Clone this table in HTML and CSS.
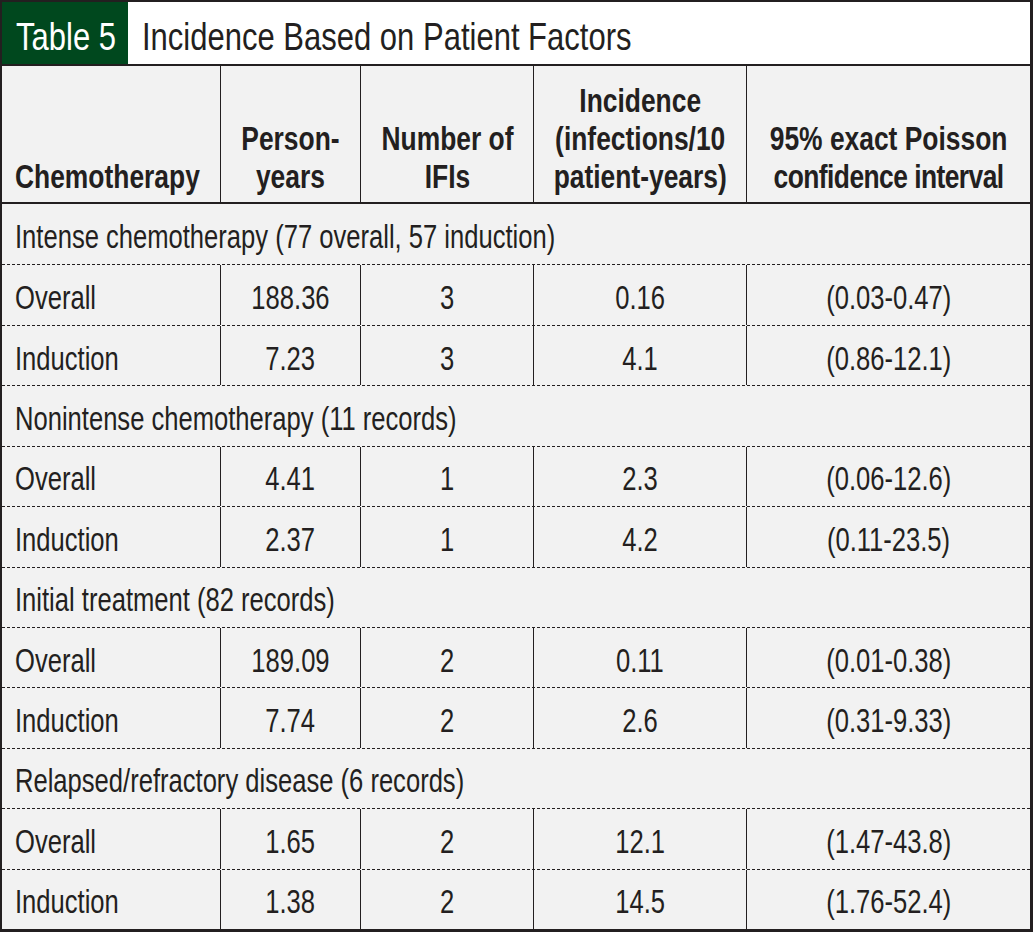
FILE: index.html
```html
<!DOCTYPE html>
<html lang="en">
<head>
<meta charset="utf-8">
<title>Table 5 Incidence Based on Patient Factors</title>
<link rel="stylesheet" href="styles.css">
</head>
<body>
<div class="figure">
  <div class="title-bar">
    <div class="label"><span class="t">Table 5</span></div>
    <div class="title"><span class="t">Incidence Based on Patient Factors</span></div>
  </div>
  <div class="head">
    <div class="hcell left"><span class="t">Chemotherapy</span></div>
    <div class="hcell"><span class="t">Person-<br>years</span></div>
    <div class="hcell"><span class="t">Number of<br>IFIs</span></div>
    <div class="hcell"><span class="t">Incidence<br>(infections/10<br>patient-years)</span></div>
    <div class="hcell last"><span class="t">95% exact Poisson<br><span class="tight">confidence interval</span></span></div>
  </div>
  <div class="body">
    <div class="section first"><span class="t">Intense chemotherapy (77 overall, 57 induction)</span></div>
    <div class="row"><div class="cell left"><span class="t">Overall</span></div><div class="cell"><span class="t">188.36</span></div><div class="cell"><span class="t">3</span></div><div class="cell"><span class="t">0.16</span></div><div class="cell last"><span class="t">(0.03-0.47)</span></div></div>
    <div class="row"><div class="cell left"><span class="t">Induction</span></div><div class="cell"><span class="t">7.23</span></div><div class="cell"><span class="t">3</span></div><div class="cell"><span class="t">4.1</span></div><div class="cell last"><span class="t">(0.86-12.1)</span></div></div>
    <div class="section"><span class="t">Nonintense chemotherapy (11 records)</span></div>
    <div class="row"><div class="cell left"><span class="t">Overall</span></div><div class="cell"><span class="t">4.41</span></div><div class="cell"><span class="t">1</span></div><div class="cell"><span class="t">2.3</span></div><div class="cell last"><span class="t">(0.06-12.6)</span></div></div>
    <div class="row"><div class="cell left"><span class="t">Induction</span></div><div class="cell"><span class="t">2.37</span></div><div class="cell"><span class="t">1</span></div><div class="cell"><span class="t">4.2</span></div><div class="cell last"><span class="t">(0.11-23.5)</span></div></div>
    <div class="section"><span class="t">Initial treatment (82 records)</span></div>
    <div class="row"><div class="cell left"><span class="t">Overall</span></div><div class="cell"><span class="t">189.09</span></div><div class="cell"><span class="t">2</span></div><div class="cell"><span class="t">0.11</span></div><div class="cell last"><span class="t">(0.01-0.38)</span></div></div>
    <div class="row"><div class="cell left"><span class="t">Induction</span></div><div class="cell"><span class="t">7.74</span></div><div class="cell"><span class="t">2</span></div><div class="cell"><span class="t">2.6</span></div><div class="cell last"><span class="t">(0.31-9.33)</span></div></div>
    <div class="section"><span class="t">Relapsed/refractory disease (6 records)</span></div>
    <div class="row"><div class="cell left"><span class="t">Overall</span></div><div class="cell"><span class="t">1.65</span></div><div class="cell"><span class="t">2</span></div><div class="cell"><span class="t">12.1</span></div><div class="cell last"><span class="t">(1.47-43.8)</span></div></div>
    <div class="row"><div class="cell left"><span class="t">Induction</span></div><div class="cell"><span class="t">1.38</span></div><div class="cell"><span class="t">2</span></div><div class="cell"><span class="t">14.5</span></div><div class="cell last"><span class="t">(1.76-52.4)</span></div></div>
  </div>
</div>
</body>
</html>
```
FILE: styles.css
```css
* {
  box-sizing: border-box;
  margin: 0;
  padding: 0;
}

body {
  margin: 0;
  background: #ffffff;
  color: #231f20;
  font-family: "Liberation Sans", Arial, sans-serif;
}

.figure {
  width: 1033px;
  height: 932px;
  border-style: solid;
  border-color: #231f20;
  border-width: 2px 3px 3px 2px;
  background: #f2f2f2;
  display: flex;
  flex-direction: column;
}

/* condensed text: Liberation Sans squeezed horizontally */
.t {
  display: inline-block;
  white-space: nowrap;
  transform: scaleX(0.775);
  transform-origin: center center;
}

.title-bar {
  height: 64px;
  flex: none;
  display: flex;
  background: #ffffff;
  border-bottom: 2px solid #231f20;
}

.label {
  width: 126px;
  flex: none;
  background: #00481e;
  color: #ffffff;
  font-size: 39px;
  padding-left: 14px;
  padding-top: 8px;
  display: flex;
  align-items: center;
}

.title {
  font-size: 39px;
  padding-left: 14px;
  padding-top: 8px;
  display: flex;
  align-items: center;
}

.label .t,
.title .t {
  transform: scaleX(0.795);
  transform-origin: left center;
}

.head,
.row {
  display: grid;
  grid-template-columns: 219px 140px 173px 213px 283px;
}

.head {
  height: 138px;
  flex: none;
  border-bottom: 2px solid #231f20;
}

.hcell {
  min-width: 0;
  border-right: 1px solid #231f20;
  display: flex;
  align-items: flex-end;
  justify-content: center;
  text-align: center;
  font-weight: bold;
  font-size: 33px;
  line-height: 38px;
  padding-bottom: 6.5px;
}

.hcell .t {
  transform: scaleX(0.8);
  transform-origin: center bottom;
}

.hcell .tight {
  letter-spacing: -0.7px;
}

.hcell.left {
  justify-content: flex-start;
  text-align: left;
  padding-left: 13px;
}

.hcell.left .t {
  transform-origin: left bottom;
}

.last {
  border-right: none;
}

.body {
  flex: 1;
  display: grid;
  grid-template-rows: repeat(12, 1fr);
}

.section,
.row {
  min-height: 0;
  border-top: 1px dashed #231f20;
}

.section.first {
  border-top: none;
}

.section {
  display: flex;
  align-items: center;
  padding-left: 13px;
  padding-top: 6px;
  font-size: 33px;
}

.section .t {
  transform-origin: left center;
}

.cell {
  min-width: 0;
  border-right: 1px solid #231f20;
  display: flex;
  align-items: center;
  justify-content: center;
  padding-top: 6px;
  font-size: 33px;
}

.cell.last {
  border-right: none;
}

.cell.left {
  justify-content: flex-start;
  padding-left: 13px;
}

.cell.left .t {
  transform-origin: left center;
}
```
